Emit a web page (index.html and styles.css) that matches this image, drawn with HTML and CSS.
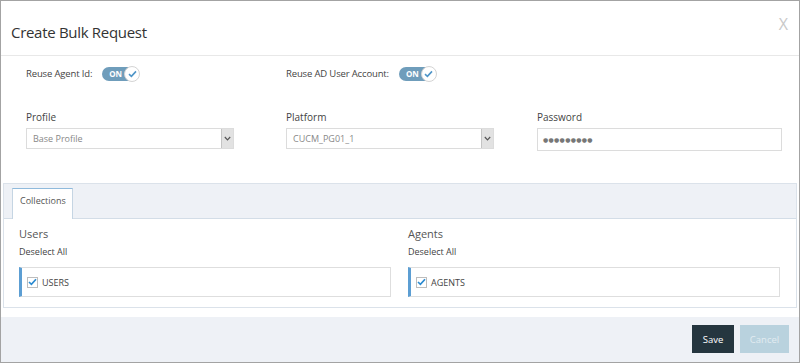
FILE: index.html
```html
<!DOCTYPE html>
<html lang="en">
<head>
    <meta charset="UTF-8">
    <title>Create Bulk Request</title>
    <link rel="stylesheet" href="styles.css">
</head>
<body>
    <div class="modal">
        <div class="modal-header">
            <h2>Create Bulk Request</h2>
            <span class="close">X</span>
        </div>

        <div class="modal-body">
            <div class="grid-row toggle-row">
                <div class="toggle-field">
                    <span class="toggle-label">Reuse Agent Id:</span>
                    <span class="switch"><span class="switch-text">ON</span><span class="knob"><svg width="9" height="8" viewBox="0 0 9 8"><path d="M1 4.2 L3.4 6.4 L8 1.4" fill="none" stroke="#4f95c8" stroke-width="1.6"/></svg></span></span>
                </div>
                <div class="toggle-field">
                    <span class="toggle-label">Reuse AD User Account:</span>
                    <span class="switch"><span class="switch-text">ON</span><span class="knob"><svg width="9" height="8" viewBox="0 0 9 8"><path d="M1 4.2 L3.4 6.4 L8 1.4" fill="none" stroke="#4f95c8" stroke-width="1.6"/></svg></span></span>
                </div>
            </div>

            <div class="grid-row field-row">
                <div class="field">
                    <label>Profile</label>
                    <div class="select">
                        <span>Base Profile</span>
                        <span class="select-arrow"><svg width="7" height="5" viewBox="0 0 7 5"><path d="M0.8 1 L3.5 3.8 L6.2 1" fill="none" stroke="#555" stroke-width="1.2"/></svg></span>
                    </div>
                </div>
                <div class="field">
                    <label>Platform</label>
                    <div class="select">
                        <span>CUCM_PG01_1</span>
                        <span class="select-arrow"><svg width="7" height="5" viewBox="0 0 7 5"><path d="M0.8 1 L3.5 3.8 L6.2 1" fill="none" stroke="#555" stroke-width="1.2"/></svg></span>
                    </div>
                </div>
                <div class="field">
                    <label>Password</label>
                    <div class="password">&#9679;&#9679;&#9679;&#9679;&#9679;&#9679;&#9679;&#9679;&#9679;</div>
                </div>
            </div>
        </div>

        <div class="collections">
            <div class="tabs">
                <div class="tab">Collections</div>
            </div>
            <div class="tab-content">
                <div class="collection">
                    <h3>Users</h3>
                    <div class="deselect">Deselect All</div>
                    <div class="item">
                        <span class="checkbox"><svg width="9" height="8" viewBox="0 0 9 8"><path d="M1 4 L3.4 6.3 L8 1.2" fill="none" stroke="#2b8bd1" stroke-width="1.7"/></svg></span>
                        USERS
                    </div>
                </div>
                <div class="collection">
                    <h3>Agents</h3>
                    <div class="deselect">Deselect All</div>
                    <div class="item">
                        <span class="checkbox"><svg width="9" height="8" viewBox="0 0 9 8"><path d="M1 4 L3.4 6.3 L8 1.2" fill="none" stroke="#2b8bd1" stroke-width="1.7"/></svg></span>
                        AGENTS
                    </div>
                </div>
            </div>
        </div>

        <div class="modal-footer">
            <button class="btn-save">Save</button>
            <button class="btn-cancel">Cancel</button>
        </div>
    </div>
</body>
</html>
```

FILE: styles.css
```css
* {
    box-sizing: border-box;
}
body {
    margin: 0;
    font-family: "Open Sans", Arial, sans-serif;
    background-color: #fff;
    color: #444;
}
.modal {
    width: 800px;
    height: 363px;
    border: 1px solid #a3a3a3;
    display: flex;
    flex-direction: column;
    background: #fff;
}
.modal-header {
    height: 55px;
    display: flex;
    align-items: center;
    justify-content: space-between;
    padding: 8px 11px 0 10px;
    border-bottom: 1px solid #e8e8e8;
}
.modal-header h2 {
    margin: 0;
    font-size: 15px;
    letter-spacing: -0.3px;
    font-weight: normal;
    color: #333;
}
.close {
    font-size: 16px;
    color: #c9c9c9;
    margin-top: -16px;
}
.modal-body {
    padding: 10px 18px 0 25px;
}
.grid-row {
    display: grid;
    grid-template-columns: 260px 251px 1fr;
}
.toggle-field {
    display: flex;
    align-items: center;
    height: 15px;
}
.toggle-label {
    font-size: 9.5px;
    letter-spacing: -0.15px;
    color: #444;
    margin-right: 10px;
}
.switch {
    position: relative;
    display: inline-flex;
    align-items: center;
    width: 37px;
    height: 14px;
    border-radius: 8px;
    background: #6f9dbb;
}
.switch-text {
    font-size: 8px;
    font-weight: bold;
    color: #fff;
    margin-left: 7px;
}
.knob {
    position: absolute;
    right: -1px;
    top: -1px;
    width: 16px;
    height: 16px;
    border-radius: 50%;
    background: #fff;
    border: 1px solid #d4d4d4;
    display: flex;
    align-items: center;
    justify-content: center;
}
.field-row {
    margin-top: 29px;
}
.field label {
    display: block;
    font-size: 10px;
    color: #444;
    margin-bottom: 4px;
}
.select {
    width: 208px;
    height: 21px;
    border: 1px solid #dcdcdc;
    display: flex;
    align-items: center;
    justify-content: space-between;
    padding-left: 6px;
    font-size: 9px;
    color: #888;
}
.select-arrow {
    width: 12px;
    height: 19px;
    background: #e2e2e2;
    border-left: 1px solid #c4c4c4;
    display: flex;
    align-items: center;
    justify-content: center;
}
.password {
    width: 245px;
    height: 23px;
    border: 1px solid #dcdcdc;
    display: flex;
    align-items: center;
    padding-left: 5px;
    font-family: "DejaVu Sans", sans-serif;
    font-size: 6px;
    letter-spacing: 0.3px;
    color: #777;
}
.collections {
    margin: 32px 2px 0 2px;
    border: 1px solid #dbe2ea;
}
.tabs {
    height: 35px;
    background: #eef1f6;
    border-bottom: 1px solid #d3dde7;
    padding: 4px 0 0 8px;
    display: flex;
    align-items: flex-end;
}
.tab {
    height: 31px;
    margin-bottom: -1px;
    padding: 5px 6px 0 7px;
    background: #fff;
    border: 1px solid #c5d5e3;
    border-top: 1px solid #8fbadc;
    border-bottom: none;
    font-size: 9px;
    color: #555;
}
.tab-content {
    display: grid;
    grid-template-columns: 372px 372px;
    column-gap: 17px;
    padding: 7px 16px 10px 15px;
}
.collection h3 {
    margin: 0;
    font-size: 11px;
    font-weight: normal;
    color: #555;
}
.deselect {
    font-size: 9px;
    color: #444;
    margin-top: 4px;
}
.item {
    margin-top: 9px;
    height: 30px;
    border: 1px solid #dedede;
    border-left: 3px solid #5c9ed3;
    display: flex;
    align-items: center;
    padding-left: 5px;
    font-size: 9px;
    color: #444;
}
.checkbox {
    width: 11px;
    height: 11px;
    border: 1px solid #bdbdbd;
    display: inline-flex;
    align-items: center;
    justify-content: center;
    margin-right: 4px;
}
.modal-footer {
    margin-top: 9px;
    flex: 1;
    background: #eef1f6;
    display: flex;
    justify-content: flex-end;
    align-items: flex-start;
    gap: 6px;
    padding: 8px 10px 0 0;
}
.modal-footer button {
    height: 28px;
    border: none;
    font-family: "Open Sans", Arial, sans-serif;
    font-size: 9.5px;
    padding: 0;
    cursor: pointer;
}
.btn-save {
    width: 42px;
    background: #25363f;
    color: #fff;
}
.btn-cancel {
    width: 49px;
    background: #b9d2de;
    color: #e2ecf1;
}
```
